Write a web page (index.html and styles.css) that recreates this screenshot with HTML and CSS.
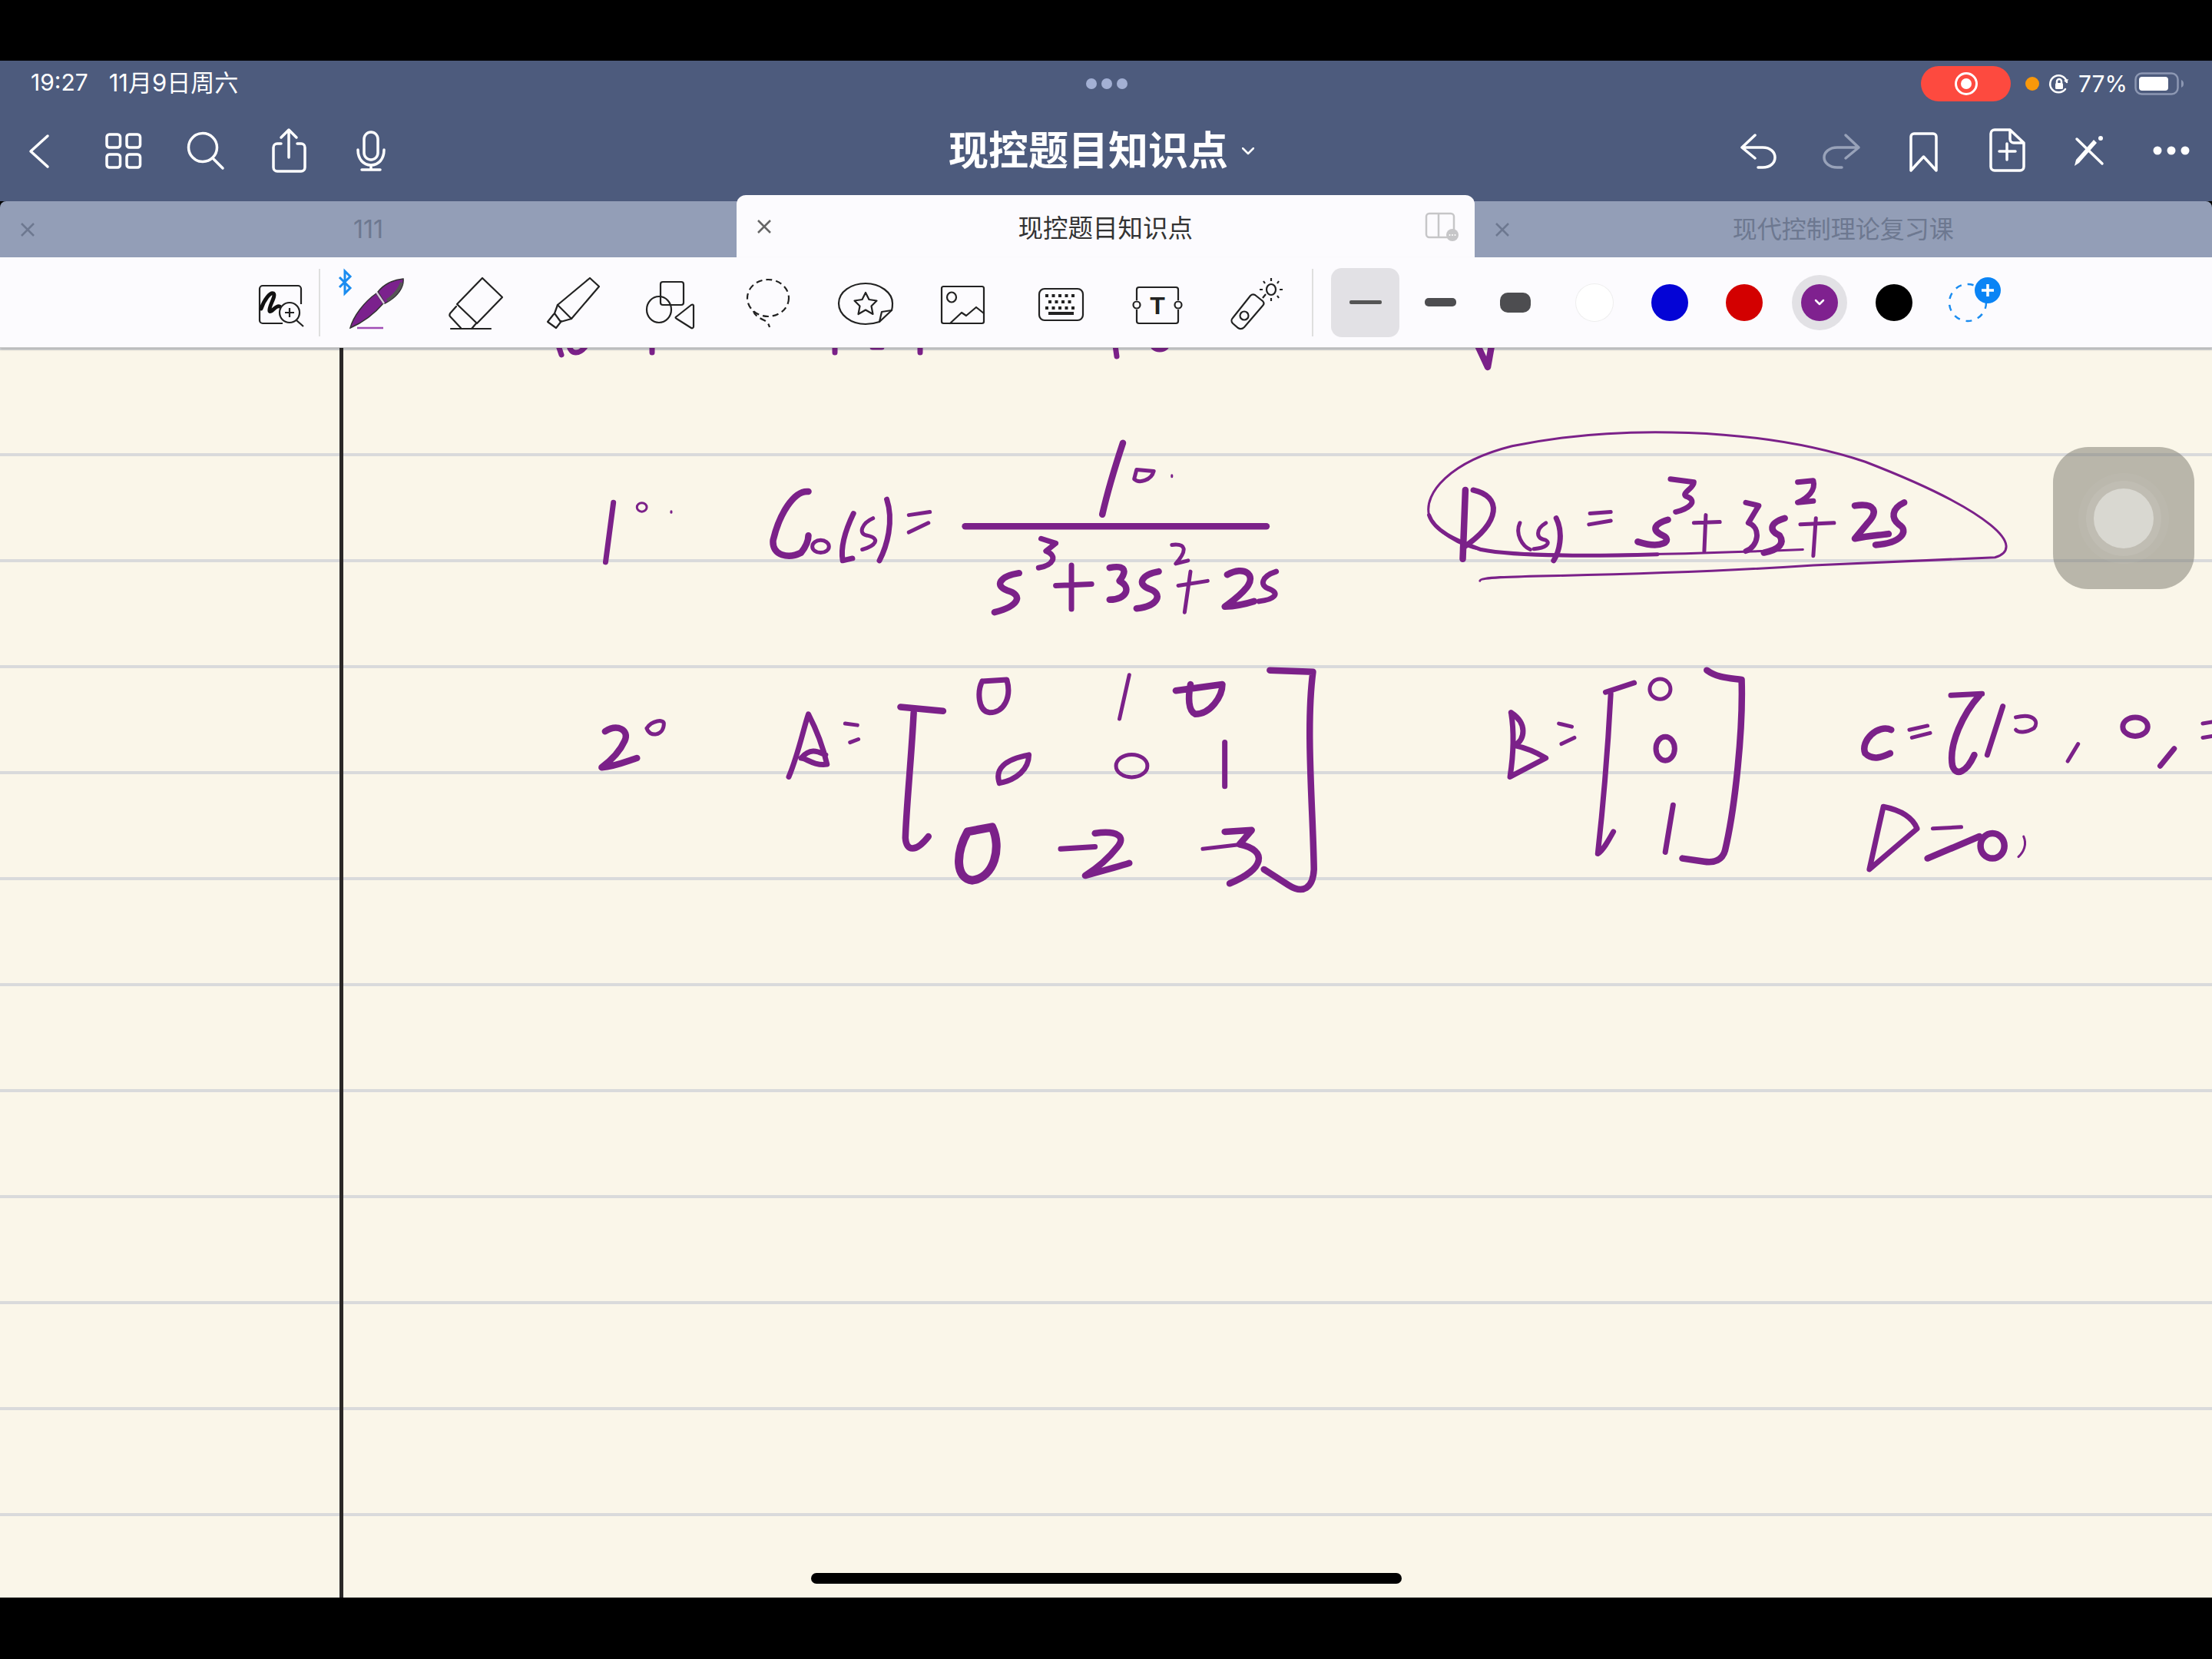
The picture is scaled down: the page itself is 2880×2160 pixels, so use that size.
FILE: index.html
```html
<!DOCTYPE html>
<html>
<head>
  <meta charset="UTF-8" />
  <title>现控题目知识点</title>
  <link rel="stylesheet" href="styles.css">
</head>
<body>
<div class="app">

  <!-- Status bar -->
  <div class="status">
    <div class="status-left"><span class="clock">19:27</span><span class="date">11月9日周六</span></div>
    <div class="status-dots"><i></i><i></i><i></i></div>
    <div class="status-right">
      <div class="rec-pill">
        <svg width="34" height="34" viewBox="0 0 34 34"><circle cx="17" cy="17" r="13.5" class="rec-ring"/><circle cx="17" cy="17" r="7" fill="#fff"/></svg>
      </div>
      <i class="orange-dot"></i>
      <svg class="lock-icon" width="28" height="28" viewBox="0 0 28 28">
        <path d="M22 21a11 11 0 1 1 2-9" class="line thin"/><path d="M26 8l-2 5-4-3z" fill="#fff"/>
        <rect x="9" y="13" width="10" height="8" rx="1.5" fill="#fff"/><path d="M11 13v-2a3 3 0 0 1 6 0v2" class="line thin"/>
      </svg>
      <span class="battery-text">77%</span>
      <svg class="battery" width="66" height="30" viewBox="0 0 66 30">
        <rect x="1.5" y="1.5" width="55" height="27" rx="8" class="batt-shell"/>
        <rect x="6" y="6" width="38" height="18" rx="4" fill="#fff"/>
        <path d="M61 10c2.500 1 3 3 3 5s-.5 4-3 5z" fill="#8d98b3"/>
      </svg>
    </div>
  </div>

  <!-- Nav bar -->
  <div class="nav">
    <div class="nav-group">
      <svg width="105" height="123" viewBox="0 139 105 123"><path d="M62 177L40 197l22 20" class="line"/></svg>
      <svg width="108" height="123" viewBox="105 139 108 123">
        <rect x="139" y="175" width="17.500" height="17" rx="3.500" class="line"/><rect x="165" y="175" width="17.500" height="17" rx="3.500" class="line"/>
        <rect x="139" y="201" width="17.500" height="17" rx="3.500" class="line"/><rect x="165" y="201" width="17.500" height="17" rx="3.500" class="line"/>
      </svg>
      <svg width="108" height="123" viewBox="213 139 108 123"><circle cx="264" cy="192" r="18.500" class="line"/><path d="M277 206l13 13" class="line"/></svg>
      <svg width="108" height="123" viewBox="321 139 108 123">
        <path d="M366 187h-5a5 5 0 0 0-5 5v26a5 5 0 0 0 5 5h31a5 5 0 0 0 5-5v-26a5 5 0 0 0-5-5h-5" class="line"/>
        <path d="M376 205v-35M366 179l10-10 10 10" class="line"/>
      </svg>
      <svg width="108" height="123" viewBox="429 139 108 123">
        <rect x="474" y="172" width="18" height="36" rx="9" class="line"/>
        <path d="M466 195c0 12 7 20 17 20s17-8 17-20M483 215v6M471 221h24" class="line"/>
      </svg>
    </div>

    <div class="doc-title">现控题目知识点<svg width="16" height="10" viewBox="0 0 16 10"><path d="M1 1l7 7 7-7" class="line thin"/></svg></div>

    <div class="nav-group">
      <svg width="107" height="123" viewBox="2236 139 107 123"><path d="M2285 176l-17 16 17 14M2268 192h27c10 0 16 6 16 13s-6 13-16 13h-6" class="line"/></svg>
      <svg width="108" height="123" viewBox="2343 139 108 123"><path d="M2403 176l17 16-17 14M2420 192h-28c-10 0-17 6-17 13s7 13 17 13h6" class="line off"/></svg>
      <svg width="107" height="123" viewBox="2451 139 107 123"><path d="M2488 222v-44a4 4 0 0 1 4-4h25a4 4 0 0 1 4 4v44l-16.500-18z" class="line"/></svg>
      <svg width="108" height="123" viewBox="2558 139 108 123">
        <path d="M2617 169h-20a5 5 0 0 0-5 5v43a5 5 0 0 0 5 5h33a5 5 0 0 0 5-5v-31zv12a5 5 0 0 0 5 5h13" class="line"/>
        <path d="M2613 187v21M2603 197h21" class="line"/>
      </svg>
      <svg width="107" height="123" viewBox="2666 139 107 123">
        <path d="M2704 181l33 32" class="line"/>
        <path d="M2701 216l2-8 23-26 4 4-23 26z" fill="#fff"/><circle cx="2735" cy="180" r="3" fill="#fff"/>
      </svg>
      <svg width="107" height="123" viewBox="2773 139 107 123"><circle cx="2809" cy="196" r="5.500" fill="#fff"/><circle cx="2827" cy="196" r="5.500" fill="#fff"/><circle cx="2845" cy="196" r="5.500" fill="#fff"/></svg>
    </div>
  </div>

  <!-- Tabs -->
  <div class="tabs">
    <div class="tab">
      <svg width="24" height="24" viewBox="0 0 24 24"><path d="M4 4l16 16M20 4L4 20" class="tab-x"/></svg>
      <span class="tab-name">111</span>
    </div>
    <div class="tab active">
      <svg width="24" height="24" viewBox="0 0 24 24"><path d="M4 4l16 16M20 4L4 20" class="tab-x"/></svg>
      <span class="tab-name">现控题目知识点</span>
      <svg class="split-icon" width="46" height="40" viewBox="0 0 46 40">
        <rect x="2" y="3" width="36" height="31" rx="4" class="split-line"/><path d="M18 3v31" class="split-line"/>
        <circle cx="36" cy="31" r="8" fill="#c6c6c8"/><circle cx="32.500" cy="31" r="1" fill="#fff"/><circle cx="36" cy="31" r="1" fill="#fff"/><circle cx="39.500" cy="31" r="1" fill="#fff"/>
      </svg>
    </div>
    <div class="tab">
      <svg width="24" height="24" viewBox="0 0 24 24"><path d="M4 4l16 16M20 4L4 20" class="tab-x"/></svg>
      <span class="tab-name raised">现代控制理论复习课</span>
    </div>
  </div>

  <!-- Pen toolbar -->
  <div class="toolbar">
    <svg width="113" height="118" viewBox="302 335 113 118">
      <path d="M362 372h-20a4 4 0 0 0-4 4v41a4 4 0 0 0 4 4h26M392 396v-20a4 4 0 0 0-4-4h-26" class="tool"/>
      <path d="M340 402c4-12 12-22 16-20 4 3-7 18-5 23 2 3 8-8 13-6" class="scribble"/>
      <circle cx="377" cy="407" r="13" class="tool"/><path d="M386 417l9 8M371 407h12M377 401v12" class="tool"/>
    </svg>
    <i class="tool-divider"></i>
    <svg width="136" height="118" viewBox="417 335 136 118">
      <path d="M442 361l14 14-7 7v-29l7 7-14 14" class="bt"/>
      <path d="M456 427c4-15 18-34 34-45l9 13c-11 13-27 25-43 32z" fill="#7b218d" stroke="#333" stroke-width="1.500"/>
      <path d="M492 380c7-9 19-16 33-17 1 10-6 23-24 32z" fill="#7b218d" stroke="#333" stroke-width="1.500"/>
      <path d="M504 391c8-5 15-12 19-23" stroke="#555" stroke-width="4" fill="none"/>
      <path d="M490.500 381l9.500 14" stroke="#d9c6de" stroke-width="2.500"/>
      <path d="M465 427h34" stroke="#a04cb5" stroke-width="2.500"/>
    </svg>
    <svg width="130" height="118" viewBox="553 335 130 118">
      <path d="M628 362l26 25-33 34-26-25z" class="tool round"/>
      <path d="M594 399l-8 9c-1 2-1 3 0 4l14 15M620 421l-6 7M587 428h52" class="tool round"/>
    </svg>
    <svg width="127" height="118" viewBox="683 335 127 118">
      <path d="M768 362l12 11-36 42-18-18z" class="tool round"/>
      <path d="M726 397l-4 11 8 11 14-4M721 409l-8 10 11 8 7-9" class="tool round"/>
    </svg>
    <svg width="127" height="118" viewBox="810 335 127 118">
      <rect x="860" y="367" width="30" height="30" rx="3" class="tool"/>
      <ellipse cx="858" cy="403" rx="16" ry="17" class="tool"/>
      <path d="M903 398v27c0 2-2 3-3 2l-19-12c-2-1-2-2 0-3l19-15c2-1 3 0 3 1z" class="tool round"/>
    </svg>
    <svg width="127" height="118" viewBox="937 335 127 118">
      <ellipse cx="1000" cy="388" rx="27" ry="24" class="tool dashed"/>
      <path d="M981 405c1 5 7 9 14 12 4 2 6 5 7 9" class="tool dashed"/>
    </svg>
    <svg width="126" height="118" viewBox="1064 335 126 118">
      <path d="M1145 419c-6 2-12 3-18 3-19 0-35-12-35-27s16-26 35-26 35 12 35 26c0 3 0 6-1 9z" class="tool"/>
      <path d="M1161 404l-13 2-3 13" class="tool round"/>
      <path d="M1127 381l4.500 9 10 1.500-7 7 2 10.500-9.500-5.500-9.500 5.500 2-10.500-7-7 10-1.500z" class="tool round"/>
    </svg>
    <svg width="127" height="118" viewBox="1190 335 127 118">
      <rect x="1226" y="373" width="55" height="48" rx="2.500" class="tool"/>
      <ellipse cx="1239" cy="387" rx="6" ry="6.500" class="tool"/>
      <path d="M1237 421l15-14 6 4 13-11 10 8" class="tool round"/>
    </svg>
    <svg width="127" height="118" viewBox="1317 335 127 118">
      <rect x="1353" y="376" width="57" height="41" rx="7" class="tool"/>
      <path d="M1361 385h42M1365 393h34M1361 401h42" class="keys"/>
      <path d="M1365 408h33" stroke="#222" stroke-width="4"/>
    </svg>
    <svg width="127" height="118" viewBox="1444 335 127 118">
      <path d="M1480 391v-14a3 3 0 0 1 3-3h48a3 3 0 0 1 3 3v14M1480 403v15a3 3 0 0 0 3 3h48a3 3 0 0 0 3-3v-15" class="tool"/>
      <circle cx="1480" cy="397" r="4.500" class="tool"/><circle cx="1534" cy="397" r="4.500" class="tool"/>
      <text x="1507" y="409" class="t-glyph">T</text>
    </svg>
    <svg width="137" height="118" viewBox="1571 335 137 118">
      <path d="M1634 384l10 8c2 2 2 4 0 6l-24 28c-2 2-5 3-8 1l-7-6c-2-2-2-5 0-7l23-29c2-2 4-2 6-1z" class="tool"/>
      <circle cx="1620" cy="411" r="5.500" class="tool"/>
      <path d="M1644 388l4-5" class="tool"/><ellipse cx="1655" cy="377" rx="6" ry="7" class="tool"/>
      <path d="M1655 362v4M1655 388v4M1640 377h4M1666 377h4M1645 366l2 3M1665 366l-2 3M1665 388l-2-3" class="tool"/>
    </svg>
    <i class="tool-divider"></i>

    <div class="width-box"><i class="w-thin"></i></div>
    <div class="width-cell mid"><i class="w-mid"></i></div>
    <div class="width-cell big"><i class="w-big"></i></div>

    <div class="swatches">
      <i class="swatch white"></i>
      <i class="swatch" style="background:#0404d6"></i>
      <i class="swatch" style="background:#d30000"></i>
      <i class="swatch picked" style="background:#7f218f"><svg width="14" height="10" viewBox="0 0 14 10"><path d="M2 2l5 5 5-5" class="line thin"/></svg></i>
      <i class="swatch" style="background:#000"></i>
      <span class="swatch-add">
        <svg width="70" height="76" viewBox="0 0 70 76">
          <circle cx="25" cy="46" r="24" class="add-ring"/>
          <circle cx="51" cy="30" r="17" fill="#0a84f5"/>
          <path d="M51 22v16M43 30h16" stroke="#fff" stroke-width="3.500"/>
        </svg>
      </span>
    </div>
  </div>

  <!-- Note page -->
  <div class="paper">
    <i class="margin-line"></i>

    <svg class="ink" width="2880" height="1627" viewBox="0 453 2880 1627">
      <!-- tail of the line above, cut off by the toolbar -->
      <g>
        <path d="M727 450l4 12M741 450c2 12 14 12 22 0M849 450v9M1087 450v9M1136 452h12M1198 450v9M1452 450l2 14M1502 452c4 4 12 4 16 0" class="m"/>
        <path d="M1924 450l13 28 5-28" class="l"/>
      </g>

      <g transform="translate(740 540) scale(.6378 .4082)">
        <path d="M92 280L76 470" class="m"/>
        <ellipse cx="150" cy="295" rx="10" ry="14" class="t"/>
        <path d="M210 308v4" class="t"/>
        <path d="M490 245C460 240 430 320 418 400C415 450 450 460 475 440C485 420 490 400 490 385" class="l"/>
        <ellipse cx="515" cy="420" rx="17" ry="20" class="s"/>
        <path d="M582 315C565 370 555 420 560 465L580 458" class="m"/>
        <path d="M622 330C600 345 590 380 610 385C640 395 625 420 600 430" class="s"/>
        <path d="M650 270C665 340 650 420 635 465" class="m"/>
        <path d="M695 320L738 310M695 375L735 345" class="s"/>
        <path d="M810 356L1425 356" class="l"/>
        <path d="M1132 90C1115 170 1100 250 1090 318" class="l"/>
        <path d="M1160 175L1195 180C1190 210 1165 220 1155 205Z" class="s"/>
        <path d="M1232 193v5" class="t"/>

        <path d="M920 505C880 515 870 545 895 560C930 575 920 610 870 630" class="l"/>
        <path d="M965 395L995 410L975 435C1000 450 990 480 960 488" class="m"/>
        <path d="M995 545L1068 540M1027 480L1027 620" class="m"/>
        <path d="M1105 488C1130 480 1145 490 1125 530C1150 550 1140 590 1105 590" class="l"/>
        <path d="M1205 500C1170 510 1160 540 1185 555C1215 570 1205 610 1160 618" class="l"/>
        <path d="M1232 415C1260 410 1265 430 1240 475L1265 465" class="s"/>
        <path d="M1245 545L1305 530M1270 500L1258 630" class="s"/>
        <path d="M1345 510C1380 480 1405 510 1385 550C1370 580 1350 600 1340 612C1370 610 1390 600 1400 595" class="l"/>
        <path d="M1445 500C1415 515 1410 545 1430 555C1455 570 1440 590 1410 595" class="m"/>

        <path d="M75 1010C100 985 125 1005 115 1040C105 1075 85 1105 68 1125C95 1122 120 1105 140 1095" class="l"/>
        <path d="M160 1000C165 1030 195 1025 195 985C195 970 170 975 160 1000" class="s"/>
        <path d="M450 1155C470 1080 480 1000 490 955C505 1000 520 1060 528 1115C500 1120 485 1095 475 1095C495 1060 510 1075 525 1085" class="m"/>
        <path d="M565 985L590 990M575 1045L592 1035" class="s"/>
        <path d="M678 932L765 945" class="l"/>
        <path d="M705 950C700 1100 690 1250 688 1350C690 1395 710 1395 735 1345" class="l"/>
        <path d="M1432 815L1520 820C1505 1000 1520 1250 1522 1450C1520 1510 1500 1530 1470 1500L1420 1450" class="l"/>

        <path d="M845 850L895 845C905 900 890 950 860 950C835 945 835 880 845 850" class="m"/>
        <path d="M1145 830L1125 970" class="s"/>
        <path d="M1240 880L1335 860C1335 900 1310 955 1280 955C1265 945 1265 900 1270 860" class="l"/>
        <path d="M880 1175C870 1130 890 1100 940 1085C940 1130 915 1165 880 1175" class="m"/>
        <ellipse cx="1150" cy="1120" rx="32" ry="36" class="s"/>
        <path d="M1340 1045L1340 1185" class="m"/>
        <path d="M815 1330L865 1315C885 1380 870 1475 825 1485C790 1480 790 1400 815 1330" class="x"/>
        <path d="M1005 1385L1075 1378" class="m"/>
        <path d="M1075 1335C1120 1325 1140 1345 1120 1380C1100 1420 1075 1450 1055 1470C1090 1455 1125 1440 1145 1430" class="l"/>
        <path d="M1295 1385L1365 1372" class="s"/>
        <path d="M1340 1330L1395 1325L1370 1370C1430 1390 1420 1450 1350 1495" class="l"/>
      </g>

      <g transform="translate(1820 540) scale(.6761 .4082)">
        <path d="M158 530C158 505 400 525 800 480L1150 455C1210 425 1150 310 900 150C700 40 420 30 220 100C100 150 50 250 60 320C70 370 120 420 160 430C220 450 400 455 780 430" class="t"/>
        <path d="M60 320C70 370 110 400 160 430C220 450 350 452 500 445" class="s"/>
        <path d="M130 240L125 460" class="l"/>
        <path d="M145 240C200 260 200 340 125 425" class="m"/>
        <path d="M235 345C225 380 240 420 255 430" class="s"/>
        <path d="M285 345C265 365 265 395 285 400C295 410 285 425 262 428" class="s"/>
        <path d="M305 330C320 380 310 440 300 465" class="m"/>
        <path d="M370 315L410 310M368 350L410 338" class="s"/>
        <path d="M520 335C490 350 490 370 510 385C530 400 510 430 462 405" class="l"/>
        <path d="M525 205L570 215C570 235 545 250 555 260C580 275 560 300 535 310" class="m"/>
        <path d="M570 345L620 342M593 320L590 435" class="s"/>
        <path d="M670 280L695 290L675 345C700 360 695 420 670 435" class="m"/>
        <path d="M745 330C715 345 715 370 735 385C745 410 735 430 705 440" class="l"/>
        <path d="M770 215L800 210C805 240 790 265 770 280L800 275" class="m"/>
        <path d="M775 350L840 345M805 330L800 450" class="s"/>
        <path d="M880 290C920 280 925 310 905 345L880 395C910 385 925 385 945 380" class="l"/>
        <path d="M975 280C950 300 950 330 965 350C985 370 970 410 920 415" class="l"/>

        <path d="M218 950C225 1020 222 1090 216 1155L285 1095C260 1070 240 1060 225 1055C245 1035 250 985 218 950" class="m"/>
        <path d="M310 985L335 995M315 1050L340 1030" class="s"/>
        <path d="M400 885L455 855" class="m"/>
        <path d="M410 890C405 1050 395 1250 385 1400C395 1390 405 1360 415 1330" class="m"/>
        <path d="M595 815C615 840 640 840 662 845C665 1000 650 1250 630 1390C625 1420 610 1430 590 1425L548 1415" class="l"/>
        <ellipse cx="505" cy="875" rx="20" ry="32" class="s"/>
        <ellipse cx="515" cy="1065" rx="18" ry="38" class="m"/>
        <path d="M530 1245L515 1395" class="m"/>

        <path d="M950 1005C925 985 890 1040 900 1080C915 1105 935 1090 948 1080" class="l"/>
        <path d="M985 1005L1020 992M990 1030L1025 1015" class="s"/>
        <path d="M1065 895L1125 890" class="m"/>
        <path d="M1120 895C1090 950 1060 1050 1068 1120C1075 1155 1095 1140 1110 1085" class="l"/>
        <path d="M1165 930L1135 1085" class="m"/>
        <path d="M1190 965C1225 950 1235 980 1225 1000C1210 1015 1195 1015 1190 1005" class="s"/>
        <path d="M1310 1050L1290 1105" class="s"/>
        <ellipse cx="1420" cy="995" rx="24" ry="30" class="m"/>
        <path d="M1495 1065L1468 1120" class="m"/>
        <path d="M1550 985L1568 980M1550 1030L1568 1025" class="s"/>
        <path d="M935 1250C925 1320 915 1400 908 1450L1000 1320C990 1280 965 1260 935 1250" class="m"/>
        <path d="M1030 1320L1085 1315" class="s"/>
        <path d="M1020 1415L1120 1345" class="l"/>
        <ellipse cx="1145" cy="1375" rx="23" ry="40" class="l"/>
        <path d="M1205 1345C1212 1370 1205 1395 1195 1410" class="t"/>
      </g>
    </svg>

    <div class="touch-btn"><i></i></div>
    <i class="home-bar"></i>
  </div>

</div>
</body>
</html>
```

FILE: styles.css
```css
* {
  box-sizing: border-box;
}

body {
  margin: 0;
  width: 2880px;
  height: 2160px;
  background: #000;
  font-family: Inter, "Noto Sans CJK SC", sans-serif;
  overflow: hidden;
}

i {
  display: block;
}

svg {
  display: block;
  flex: none;
}

.app {
  margin-top: 79px;
  height: 2001px;
  display: flex;
  flex-direction: column;
}

.line {
  fill: none;
  stroke: #fff;
  stroke-width: 3.5;
  stroke-linecap: round;
  stroke-linejoin: round;
}

.line.thin {
  stroke-width: 2.5;
}

.line.off {
  stroke: #98a2b9;
}

/* status bar */
.status {
  height: 60px;
  background: #4d5b7d;
  display: grid;
  grid-template-columns: 1fr auto 1fr;
  align-items: center;
  padding: 0 35px 0 40px;
  color: #fff;
  font-size: 30px;
}

.status-left {
  display: flex;
  align-items: center;
  gap: 27px;
}

.clock {
  line-height: 36px;
  padding-bottom: 4px;
}

.date {
  font-size: 31px;
  line-height: 36px;
  padding-bottom: 2px;
}

.status-dots {
  display: flex;
  gap: 6px;
  margin-left: -3px;
}

.status-dots i {
  width: 14px;
  height: 14px;
  border-radius: 50%;
  background: #a3b0d4;
}

.status-right {
  justify-self: end;
  display: flex;
  align-items: center;
}

.rec-pill {
  width: 117px;
  height: 46px;
  border-radius: 23px;
  background: #fd4a3f;
  display: flex;
  align-items: center;
  justify-content: center;
  margin-right: 19px;
}

.rec-ring {
  fill: none;
  stroke: #fff;
  stroke-width: 3;
}

.orange-dot {
  width: 18px;
  height: 18px;
  border-radius: 50%;
  background: #f9980a;
  margin-right: 12px;
}

.lock-icon {
  margin-right: 11px;
}

.battery-text {
  margin-right: 9px;
}

.batt-shell {
  fill: none;
  stroke: #8d98b3;
  stroke-width: 2.5;
}

/* nav bar */
.nav {
  height: 123px;
  background: #4d5b7d;
  display: grid;
  grid-template-columns: 1fr auto 1fr;
  align-items: start;
}

.nav-group {
  display: flex;
}

.nav-group:last-child {
  justify-self: end;
}

.doc-title {
  display: flex;
  align-items: center;
  gap: 18px;
  margin-left: -12px;
  color: #fff;
  font-size: 52px;
  font-weight: 700;
  line-height: 116px;
}

/* tabs */
.tabs {
  height: 73px;
  background: #939eb7;
  border-radius: 8px 8px 0 0;
  display: flex;
  flex: none;
}

.tab {
  flex: 1;
  display: grid;
  grid-template-columns: 1fr auto 1fr;
  align-items: center;
  padding: 0 24px;
  color: #6d7890;
  font-size: 32px;
}

.tab:first-child {
  flex: 0 0 959px;
}

.tab-name.raised {
  margin-bottom: 6px;
}

.tab.active {
  margin-top: -8px;
  height: 81px;
  background: #fcfbfe;
  border-radius: 12px 12px 0 0;
  color: #333;
  font-size: 32.5px;
}

.tab-x {
  fill: none;
  stroke: #6d7890;
  stroke-width: 2.5;
}

.active .tab-x {
  stroke: #666;
}

.split-icon {
  justify-self: end;
  margin-right: -5px;
}

.split-line {
  fill: none;
  stroke: #c6c6c8;
  stroke-width: 2.5;
}

/* pen toolbar */
.toolbar {
  height: 118px;
  background: #fcfbfe;
  border-bottom: 1px solid #c9c9c9;
  box-shadow: 0 2px 3px rgba(0,0,0,0.18);
  display: flex;
  align-items: center;
  padding-left: 302px;
  flex: none;
  position: relative;
  z-index: 1;
}

.tool {
  fill: none;
  stroke: #222;
  stroke-width: 2.2;
}

.tool.round {
  stroke-linejoin: round;
  stroke-linecap: round;
}

.tool.dashed {
  stroke-dasharray: 8 5;
}

.scribble {
  fill: none;
  stroke: #111;
  stroke-width: 5;
  stroke-linecap: round;
}

.bt {
  fill: none;
  stroke: #1a8cf0;
  stroke-width: 3;
}

.keys {
  fill: none;
  stroke: #222;
  stroke-width: 4;
  stroke-dasharray: 4 4.500;
}

.t-glyph {
  font-family: "Liberation Sans", sans-serif;
  font-size: 32px;
  font-weight: 700;
  text-anchor: middle;
  fill: #222;
}

.tool-divider {
  width: 2px;
  height: 88px;
  background: #dfdfdf;
  flex: none;
}

.width-box {
  width: 89px;
  height: 90px;
  margin-left: 23px;
  background: #e2e1e5;
  border-radius: 14px;
  display: flex;
  align-items: center;
  justify-content: center;
}

.width-cell {
  display: flex;
  align-items: center;
  justify-content: center;
}

.width-cell.mid {
  width: 107px;
}

.width-cell.big {
  width: 88px;
}

.w-thin {
  width: 42px;
  height: 5px;
  background: #555;
  border-radius: 2px;
}

.w-mid {
  width: 41px;
  height: 11px;
  background: #4d4d50;
  border-radius: 5px;
}

.w-big {
  width: 40px;
  height: 26px;
  background: #4d4d50;
  border-radius: 10px;
}

.swatches {
  display: flex;
  align-items: center;
  gap: 49.6px;
  margin-left: 35px;
}

.swatch {
  width: 48px;
  height: 48px;
  border-radius: 50%;
  display: flex;
  align-items: center;
  justify-content: center;
}

.swatch.white {
  background: #fff;
  box-shadow: 0 0 0 1px #eee;
}

.swatch.picked {
  box-shadow: 0 0 0 12px #e2e1e5;
}

.swatch-add {
  margin: -16px 0 0 -3px;
}

.add-ring {
  fill: none;
  stroke: #1a8cf0;
  stroke-width: 2.5;
  stroke-dasharray: 8 8;
}

/* note page */
.paper {
  flex: 1;
  position: relative;
  overflow: hidden;
  background-color: #faf6e9;
  background-image: linear-gradient(to bottom, #d9dadb 0, #d9dadb 4px, transparent 4px);
  background-size: 100% 138px;
  background-repeat: repeat-y;
  background-position: 0 137px;
}

.margin-line {
  position: absolute;
  left: 442px;
  top: 0;
  bottom: 0;
  width: 5px;
  background: #2a2827;
}

.ink {
  position: absolute;
  left: 0;
  top: 0;
}

.ink path,
.ink ellipse {
  fill: none;
  stroke: #7b2189;
  stroke-linecap: round;
  stroke-linejoin: round;
  vector-effect: non-scaling-stroke;
}

.ink .t { stroke-width: 3; }
.ink .s { stroke-width: 5; }
.ink .m { stroke-width: 7; }
.ink .l { stroke-width: 8.5; }
.ink .x { stroke-width: 11; }

.touch-btn {
  position: absolute;
  left: 2673px;
  top: 129px;
  width: 184px;
  height: 185px;
  border-radius: 46px;
  background: rgba(120,118,108,0.5);
  display: flex;
  align-items: center;
  justify-content: center;
}

.touch-btn i {
  width: 78px;
  height: 78px;
  border-radius: 50%;
  background: #d9d8d1;
  box-shadow: 0 0 0 10px rgba(255,255,255,0.08), 0 0 0 20px rgba(255,255,255,0.04);
}

.home-bar {
  position: absolute;
  left: 1056px;
  top: 1595px;
  width: 769px;
  height: 14px;
  border-radius: 7px;
  background: #000;
}
```
